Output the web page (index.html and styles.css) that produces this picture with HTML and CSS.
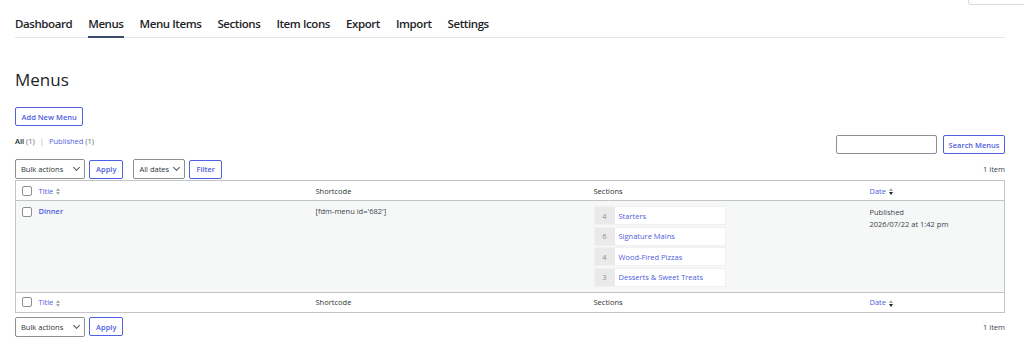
FILE: index.html
```html
<!DOCTYPE html>
<html lang="en">
<head>
  <meta charset="UTF-8" />
  <title>Menus</title>
  <link rel="stylesheet" href="styles.css">
</head>
<body>
  <div class="screen-tab-row"><div class="screen-tab"></div></div>
  <div class="wrap">
    <nav class="tabs">
      <a href="#">Dashboard</a>
      <a href="#" class="active">Menus</a>
      <a href="#">Menu Items</a>
      <a href="#">Sections</a>
      <a href="#">Item Icons</a>
      <a href="#">Export</a>
      <a href="#">Import</a>
      <a href="#">Settings</a>
    </nav>

    <h1>Menus</h1>
    <a href="#" class="btn add-new">Add New Menu</a>

    <div class="subsubsub-row">
      <ul class="subsubsub">
        <li class="current">All <span class="count">(1)</span></li>
        <li class="sep">|</li>
        <li><a href="#">Published <span class="count">(1)</span></a></li>
      </ul>
      <div class="search-box">
        <input type="search" />
        <button class="btn">Search Menus</button>
      </div>
    </div>

    <div class="tablenav">
      <div class="actions">
        <div class="select">Bulk actions <span class="caret"></span></div>
        <button class="btn">Apply</button>
        <div class="select dates">All dates <span class="caret"></span></div>
        <button class="btn">Filter</button>
      </div>
      <span class="num-items">1 item</span>
    </div>

    <table class="list-table">
      <thead>
        <tr>
          <th class="check"><span class="cb"></span></th>
          <th class="col-title"><a href="#">Title</a> <span class="sort"><i class="up"></i><i class="down"></i></span></th>
          <th class="col-short">Shortcode</th>
          <th class="col-sections">Sections</th>
          <th class="col-date"><a href="#">Date</a> <span class="sort on"><i class="up"></i><i class="down"></i></span></th>
        </tr>
      </thead>
      <tbody>
        <tr>
          <td class="check"><span class="cb"></span></td>
          <td class="col-title"><a href="#" class="row-title">Dinner</a></td>
          <td class="col-short">[fdm-menu id='682']</td>
          <td class="col-sections">
            <ul class="sections">
              <li><span class="num">4</span><a href="#">Starters</a></li>
              <li><span class="num">6</span><a href="#">Signature Mains</a></li>
              <li><span class="num">4</span><a href="#">Wood-Fired Pizzas</a></li>
              <li><span class="num">3</span><a href="#">Desserts &amp; Sweet Treats</a></li>
            </ul>
          </td>
          <td class="col-date">Published<br>2026/07/22 at 1:42 pm</td>
        </tr>
      </tbody>
      <tfoot>
        <tr>
          <th class="check"><span class="cb"></span></th>
          <th class="col-title"><a href="#">Title</a> <span class="sort"><i class="up"></i><i class="down"></i></span></th>
          <th class="col-short">Shortcode</th>
          <th class="col-sections">Sections</th>
          <th class="col-date"><a href="#">Date</a> <span class="sort on"><i class="up"></i><i class="down"></i></span></th>
        </tr>
      </tfoot>
    </table>

    <div class="tablenav bottom">
      <div class="actions">
        <div class="select">Bulk actions <span class="caret"></span></div>
        <button class="btn">Apply</button>
      </div>
      <span class="num-items">1 item</span>
    </div>
  </div>
</body>
</html>
```

FILE: styles.css
```css
* { box-sizing: border-box; }
html, body { margin: 0; padding: 0; }
body {
  font-family: "Open Sans", "Noto Sans", sans-serif;
  background: #fff;
  color: #3c434a;
  font-size: 7.5px;
}
a { color: #4f60e0; text-decoration: none; }

.screen-tab-row {
  display: flex;
  justify-content: flex-end;
  height: 5px;
}
.screen-tab {
  width: 56px;
  height: 5px;
  border: 1px solid #dcdcde;
  border-top: none;
  border-right: none;
  border-radius: 0 0 0 3px;
}

.wrap {
  padding: 0 19px 0 15px;
}

.tabs {
  display: flex;
  gap: 16px;
  border-bottom: 1px solid #e4e4e7;
  margin-top: 10px;
}
.tabs a {
  color: #1d2327;
  font-size: 11.5px;
  font-weight: 600;
  letter-spacing: -0.42px;
  line-height: 16px;
  padding: 1px 0 4px;
  border-bottom: 2px solid transparent;
  margin-bottom: -1px;
}
.tabs a.active {
  border-bottom-color: #3c4a6b;
}

h1 {
  font-size: 17px;
  font-weight: 400;
  color: #1d2327;
  margin: 32px 0 17px;
  line-height: 20px;
}

.btn {
  display: inline-flex;
  align-items: center;
  height: 19px;
  padding: 0 6px;
  border: 1px solid #4f60e0;
  border-radius: 2px;
  background: #fff;
  color: #4f60e0;
  font-family: inherit;
  font-size: 7.5px;
  font-weight: 600;
  cursor: pointer;
}
.btn.add-new { padding: 0 5.5px; }

.subsubsub-row {
  display: flex;
  justify-content: space-between;
  align-items: flex-start;
  margin-top: 9px;
}
.subsubsub {
  list-style: none;
  margin: 1px 0 0;
  padding: 0;
  display: flex;
  gap: 5px;
}
.subsubsub .current { color: #1d2327; font-weight: 600; }
.subsubsub .count { color: #646970; font-weight: 400; }
.subsubsub .sep { color: #a7aaad; }

.search-box {
  display: flex;
  gap: 6px;
}
.search-box input {
  width: 101px;
  height: 19px;
  border: 1px solid #8c8f94;
  border-radius: 2px;
  padding: 0 4px;
}
.search-box .btn { padding: 0 4.5px; }

.tablenav {
  display: flex;
  justify-content: space-between;
  align-items: center;
  margin-top: 4px;
  height: 22px;
}
.tablenav .actions {
  display: flex;
  gap: 4px;
  align-items: center;
}
.select {
  display: flex;
  align-items: center;
  justify-content: space-between;
  width: 70px;
  height: 20px;
  padding: 0 5px;
  border: 1px solid #8c8f94;
  border-radius: 2px;
  color: #2c3338;
}
.select.dates { width: 52px; margin-left: 6px; }
.caret {
  width: 5px;
  height: 5px;
  border-right: 1.5px solid #50575e;
  border-bottom: 1.5px solid #50575e;
  transform: rotate(45deg);
  margin-top: -3px;
}
.num-items { color: #3c434a; }

.list-table {
  width: 100%;
  border-collapse: collapse;
  border: 1px solid #c3c4c7;
  margin-top: 0;
}
.list-table th {
  font-weight: 400;
  text-align: left;
  height: 20px;
  padding: 0 6px;
  color: #2c3338;
  background: #fff;
}
.list-table thead th { border-bottom: 1px solid #c3c4c7; }
.list-table tfoot th { border-top: 1px solid #c3c4c7; }
.list-table tbody td {
  background: #f6f7f7;
  vertical-align: top;
  padding: 5px 6px;
  color: #3c434a;
}
.list-table .check { width: 17px; padding: 0 0 0 6px; }
.list-table tbody .check { padding-top: 6px; }
.col-title { width: 277px; }
.col-short { width: 278px; }
.col-sections { width: 276px; }
.cb {
  display: block;
  width: 10px;
  height: 10px;
  border: 1px solid #8c8f94;
  border-radius: 2px;
  background: #fff;
}
.row-title { font-weight: 600; }

.sort {
  display: inline-flex;
  flex-direction: column;
  gap: 1px;
  vertical-align: middle;
  margin-left: 1px;
}
.sort i {
  width: 0;
  height: 0;
  border-left: 2.5px solid transparent;
  border-right: 2.5px solid transparent;
}
.sort .up { border-bottom: 3px solid #a7aaad; }
.sort .down { border-top: 3px solid #a7aaad; }
.sort.on .down { border-top-color: #1d2327; }

.sections {
  list-style: none;
  margin: 0;
  padding: 0;
  display: flex;
  flex-direction: column;
  gap: 1.5px;
  width: 132px;
}
.sections li {
  display: flex;
  height: 19px;
  background: #fff;
  border: 1px solid #f0f0f1;
}
.sections .num {
  width: 20px;
  background: #eaeaeb;
  color: #8c8f94;
  display: flex;
  align-items: center;
  justify-content: center;
}
.sections a {
  display: flex;
  align-items: center;
  padding-left: 4px;
}
.col-date { line-height: 12px; }

.tablenav.bottom { margin-top: 3px; }
```
